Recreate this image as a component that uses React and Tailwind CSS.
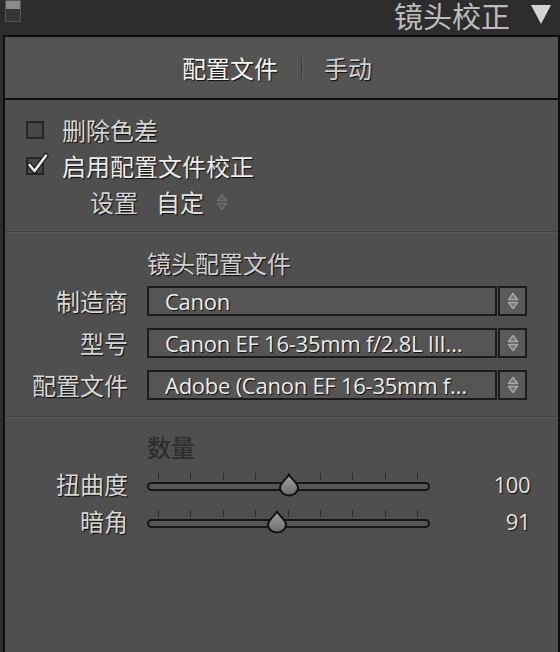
import React from 'react';

const cjk = "font-['Noto_Sans_CJK_SC','Noto_Sans',sans-serif]";
const latin = "font-['Open_Sans','Noto_Sans',sans-serif]";
const shadow = '[text-shadow:1px_1px_1px_rgba(0,0,0,0.85)]';

const UpDown = ({ className }) => (
  <svg width="12" height="18" viewBox="0 0 12 18" className={className}>
    <path d="M6 1.5 L10.5 7.5 L1.5 7.5 Z" fill="currentColor" fillOpacity="0.35" stroke="currentColor" strokeWidth="1.4" strokeLinejoin="round" />
    <path d="M6 16.5 L10.5 10.5 L1.5 10.5 Z" fill="currentColor" fillOpacity="0.35" stroke="currentColor" strokeWidth="1.4" strokeLinejoin="round" />
  </svg>
);

const Checkbox = ({ checked }) => (
  <div className="relative w-[18px] h-[18px] border-2 border-[#252525] bg-[#474747] shrink-0">
    {checked && (
      <svg width="24" height="24" viewBox="0 0 24 24" className="absolute -left-[2px] -top-[7px]">
        <path d="M3.5 13 L8.5 19 L20 3.5" fill="none" stroke="#1a1a1a" strokeWidth="5" strokeLinecap="round" strokeLinejoin="round" />
        <path d="M3.5 13 L8.5 19 L20 3.5" fill="none" stroke="#ececec" strokeWidth="2.6" strokeLinecap="round" strokeLinejoin="round" />
      </svg>
    )}
  </div>
);

const Select = ({ label, value }) => (
  <div className="flex items-center h-[30px]">
    <div className={`w-[123px] text-right text-[24px] leading-none text-[#d6d6d6] ${cjk} ${shadow}`}>{label}</div>
    <div className="ml-[19px] flex w-[380px] h-[30px]">
      <div className="flex-1 h-full border-2 border-[#1c1c1c] bg-[#555555] flex items-center pl-[16px] overflow-hidden">
        <span className={`text-[22px] leading-none tracking-[-0.25px] whitespace-nowrap text-[#ececec] ${latin} ${shadow}`}>{value}</span>
      </div>
      <div className="w-[29px] h-full ml-[1px] border-2 border-[#1c1c1c] bg-[#5a5a5a] flex items-center justify-center text-[#a8a8a8]">
        <UpDown />
      </div>
    </div>
  </div>
);

const Thumb = () => (
  <svg width="24" height="24" viewBox="0 0 24 24">
    <defs>
      <linearGradient id="thumbfill" x1="0" y1="0" x2="0" y2="1">
        <stop offset="0" stopColor="#a3a3a3" />
        <stop offset="1" stopColor="#6b6b6b" />
      </linearGradient>
    </defs>
    <path d="M12 1.5 C13.5 5.5 21 9.5 21 15 A9 7.5 0 0 1 3 15 C3 9.5 10.5 5.5 12 1.5 Z" fill="url(#thumbfill)" stroke="#111" strokeWidth="2" strokeLinejoin="round" />
  </svg>
);

const ticks = [0, 1, 2, 3, 4, 5, 6, 7, 8];

const Slider = ({ label, value, pos }) => (
  <div className="flex items-center h-[37px]">
    <div className={`w-[123px] text-right text-[24px] leading-none text-[#d6d6d6] ${cjk} ${shadow}`}>{label}</div>
    <div className="ml-[19px] relative w-[283px] h-[26px]">
      <div className="absolute left-[11px] right-[12px] top-[2px] flex justify-between">
        {ticks.map((t) => (
          <div key={t} className="w-px h-[7px] bg-[#2e2e2e]" />
        ))}
      </div>
      <div className="absolute left-0 right-0 top-[11px] h-[9px] rounded-full border-2 border-[#161616] bg-[#565656]" />
      <div className="absolute top-[2px]" style={{ left: pos - 12 }}>
        <Thumb />
      </div>
    </div>
    <div className={`w-[100px] text-right text-[22px] leading-none tracking-[-0.5px] text-[#e4e4e4] ${latin} ${shadow}`}>{value}</div>
  </div>
);

export default function App() {
  return (
    <div className="w-[560px] h-[652px] bg-[#2d2d2d] flex flex-col overflow-hidden">
      {/* header */}
      <div className="h-[35px] flex items-start justify-between pl-[5px] pr-[8px] shrink-0">
        <div className="w-[16px] h-[22px] border border-[#555] bg-[#363636] flex flex-col">
          <div className="h-[8px] bg-[#8a8a8a]" />
        </div>
        <div className="flex items-start">
          <span className={`-mt-[5px] text-[29px] leading-[40px] text-[#bdbdbd] ${cjk}`}>镜头校正</span>
          <svg width="22" height="22" viewBox="0 0 22 22" className="ml-[20px] mt-[3px]">
            <path d="M1 2 L21 2 L11 21 Z" fill="#d4d4d4" />
          </svg>
        </div>
      </div>

      {/* panel */}
      <div className="flex-1 ml-[3px] border-x-2 border-t-2 border-[#0f0f0f] flex flex-col">
        {/* tabs */}
        <div className="h-[61px] bg-[#545454] flex items-center pl-[177px] shrink-0">
          <span className={`text-[24px] leading-none text-[#f4f4f4] ${cjk} ${shadow}`}>配置文件</span>
          <div className="ml-[23px] w-[2px] h-[22px] bg-[#3a3a3a] border-r border-[#606060]" />
          <span className={`ml-[21px] text-[24px] leading-none text-[#d0d0d0] ${cjk} ${shadow}`}>手动</span>
        </div>
        <div className="h-[2px] bg-[#0f0f0f] shrink-0" />

        {/* content */}
        <div className="flex-1 bg-[#4f4f4f] flex flex-col pt-[12px]">
          <div className="h-[36px] flex items-center pl-[21px]">
            <Checkbox />
            <span className={`ml-[18px] text-[24px] leading-none text-[#d6d6d6] ${cjk} ${shadow}`}>删除色差</span>
          </div>
          <div className="h-[36px] flex items-center pl-[21px]">
            <Checkbox checked />
            <span className={`ml-[18px] text-[24px] leading-none text-[#ececec] ${cjk} ${shadow}`}>启用配置文件校正</span>
          </div>
          <div className="h-[35px] flex items-center pl-[85px]">
            <span className={`text-[24px] leading-none text-[#d6d6d6] ${cjk} ${shadow}`}>设置</span>
            <span className={`ml-[18px] text-[24px] leading-none text-[#e4e4e4] ${cjk} ${shadow}`}>自定</span>
            <UpDown className="ml-[12px] text-[#6e6e6e]" />
          </div>

          <div className="mt-[12px] h-[2px] bg-[#424242] border-b border-[#575757]" />

          <div className="mt-[14px] h-[32px] flex items-center pl-[142px]">
            <span className={`text-[24px] leading-none text-[#cfcfcf] ${cjk} ${shadow}`}>镜头配置文件</span>
          </div>
          <div className="mt-[7px] flex flex-col gap-[12px]">
            <Select label="制造商" value="Canon" />
            <Select label="型号" value="Canon EF 16-35mm f/2.8L III…" />
            <Select label="配置文件" value="Adobe (Canon EF 16-35mm f…" />
          </div>

          <div className="mt-[16px] h-[2px] bg-[#424242] border-b border-[#575757]" />

          <div className="mt-[13px] h-[32px] flex items-center pl-[142px]">
            <span className={`text-[24px] leading-none font-medium text-[#2e2e2e] ${cjk}`}>数量</span>
          </div>
          <div className="mt-[2px] flex flex-col">
            <Slider label="扭曲度" value="100" pos={142} />
            <Slider label="暗角" value="91" pos={130} />
          </div>
        </div>
      </div>
    </div>
  );
}
